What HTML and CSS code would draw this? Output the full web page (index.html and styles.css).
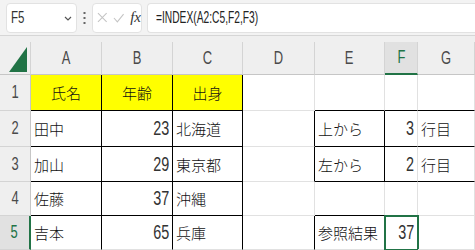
FILE: index.html
```html
<!DOCTYPE html>
<html lang="ja">
<head>
    <meta charset="UTF-8">
    <title>INDEX関数</title>
    <link rel="stylesheet" href="styles.css">
</head>
<body>

    <!-- Formula bar -->
    <div class="toolbar">
        <div class="namebox">
            <span class="narrow left">F5</span>
            <svg class="chevron" width="8" height="5" viewBox="0 0 8 5"><path d="M1 1l3 3 3-3" fill="none" stroke="#555" stroke-width="1.2"/></svg>
        </div>
        <svg class="grip" width="3" height="12" viewBox="0 0 3 12">
            <rect x="0.5" y="0" width="2" height="2" fill="#666"/>
            <rect x="0.5" y="5" width="2" height="2" fill="#666"/>
            <rect x="0.5" y="10" width="2" height="2" fill="#666"/>
        </svg>
        <div class="fxbox">
            <svg width="11" height="11" viewBox="0 0 11 11"><path d="M1 1l9 9M10 1l-9 9" stroke="#c4c4c4" stroke-width="1.1" fill="none"/></svg>
            <svg width="12" height="10" viewBox="0 0 12 10"><path d="M1 5l3.5 4L11 1" stroke="#c4c4c4" stroke-width="1.1" fill="none"/></svg>
            <span class="fx">fx</span>
        </div>
        <div class="formula"><span class="narrow left">=INDEX(A2:C5,F2,F3)</span></div>
    </div>

    <div class="gap"></div>

    <!-- Sheet -->
    <div class="sheet">
        <div class="head corner">
            <svg width="19" height="25" viewBox="0 0 19 25"><path d="M18 0v25H0z" fill="#217346"/></svg>
        </div>
        <div class="head"><span class="narrow">A</span></div>
        <div class="head"><span class="narrow">B</span></div>
        <div class="head"><span class="narrow">C</span></div>
        <div class="head"><span class="narrow">D</span></div>
        <div class="head"><span class="narrow">E</span></div>
        <div class="head active-col"><span class="narrow">F</span></div>
        <div class="head"><span class="narrow">G</span></div>

        <div class="rowhead"><span class="narrow">1</span></div>
        <div class="cell title br bb">氏名</div>
        <div class="cell title br bb">年齢</div>
        <div class="cell title br bb">出身</div>
        <div class="cell"></div>
        <div class="cell bb"></div>
        <div class="cell bb"></div>
        <div class="cell bb"></div>

        <div class="rowhead"><span class="narrow">2</span></div>
        <div class="cell br bb">田中</div>
        <div class="cell num br bb"><span class="narrow right">23</span></div>
        <div class="cell br bb">北海道</div>
        <div class="cell br"></div>
        <div class="cell br bb">上から</div>
        <div class="cell num bb"><span class="narrow right">3</span></div>
        <div class="cell bb">行目</div>

        <div class="rowhead"><span class="narrow">3</span></div>
        <div class="cell br bb">加山</div>
        <div class="cell num br bb"><span class="narrow right">29</span></div>
        <div class="cell br bb">東京都</div>
        <div class="cell br"></div>
        <div class="cell br bb">左から</div>
        <div class="cell num bb"><span class="narrow right">2</span></div>
        <div class="cell bb">行目</div>

        <div class="rowhead"><span class="narrow">4</span></div>
        <div class="cell br bb">佐藤</div>
        <div class="cell num br bb"><span class="narrow right">37</span></div>
        <div class="cell br bb">沖縄</div>
        <div class="cell"></div>
        <div class="cell bb"></div>
        <div class="cell bb"></div>
        <div class="cell"></div>

        <div class="rowhead active-row"><span class="narrow">5</span></div>
        <div class="cell br">吉本</div>
        <div class="cell num br"><span class="narrow right">65</span></div>
        <div class="cell br">兵庫</div>
        <div class="cell br"></div>
        <div class="cell">参照結果</div>
        <div class="cell num selected"><span class="narrow right">37</span></div>
        <div class="cell"></div>
    </div>

</body>
</html>
```

FILE: styles.css
```css
/* --- Basic Setup --- */
:root {
    --toolbar-bg: #f3f3f3;
    --head-bg: #efefef;
    --grid-line: #e1e1e1;
    --head-line: #d4d4d4;
    --excel-green: #217346;
    --jp: "Noto Sans CJK JP", sans-serif;
}

body {
    margin: 0;
    width: 475px;
    height: 250px;
    overflow: hidden;
    font-family: var(--jp);
    font-weight: 300;
    color: #111;
    background-color: #ffffff;
}

/* Tall, narrow latin glyphs like Excel's UI font (no condensed face installed) */
.narrow {
    display: inline-block;
    font-family: "Liberation Sans", sans-serif;
    font-weight: normal;
    transform: scaleX(0.72);
}

.narrow.left {
    transform-origin: left center;
}

.narrow.right {
    transform-origin: right center;
}

/* --- Formula Bar --- */
.toolbar {
    display: flex;
    align-items: center;
    height: 36px;
    padding-left: 6px;
    background-color: var(--toolbar-bg);
    border-bottom: 1px solid #d6d6d6;
    box-sizing: border-box;
}

.namebox,
.fxbox,
.formula {
    height: 30px;
    background-color: #ffffff;
    border: 1px solid #e2e2e2;
    border-radius: 4px;
    box-sizing: border-box;
    display: flex;
    align-items: center;
}

.namebox {
    width: 71px;
    padding: 0 4px 0 4px;
    justify-content: space-between;
    font-size: 16px;
    color: #333;
}

.chevron {
    margin-top: 2px;
}

.grip {
    margin: 0 6px 0 6px;
}

.fxbox {
    width: 50px;
    padding-left: 4px;
    gap: 5px;
    margin-right: 5px;
}

.fx {
    font-family: "Liberation Serif", serif;
    font-style: italic;
    font-size: 15px;
    color: #333;
    margin-left: 1px;
}

.formula {
    flex: 1;
    padding-left: 8px;
    border-right: none;
    border-radius: 4px 0 0 4px;
    font-size: 16px;
    color: #222;
}

.formula .narrow {
    transform: scaleX(0.64);
}

.gap {
    height: 6px;
    background-color: var(--head-bg);
}

/* --- Sheet Grid --- */
.sheet {
    display: grid;
    grid-template-columns: 31px 71px 71px 70px 72px 70px 33px 1fr;
    grid-template-rows: 33px 36px 36px 35px 34px 34px;
}

.head,
.rowhead {
    background-color: var(--head-bg);
    color: #4a4a4a;
    font-size: 18px;
    display: flex;
    align-items: center;
    justify-content: center;
    box-sizing: border-box;
}

.head {
    border-right: 1px solid var(--head-line);
    border-bottom: 1px solid #c6c6c6;
}

.rowhead {
    border-right: 1px solid #c6c6c6;
    border-bottom: 1px solid var(--head-line);
}

.corner {
    justify-content: flex-start;
    padding-left: 9px;
    padding-top: 3px;
}

.active-col {
    background-color: #e1e1e1;
    color: var(--excel-green);
    border-bottom: 2px solid var(--excel-green);
}

.active-row {
    background-color: #e1e1e1;
    color: var(--excel-green);
    border-right: 2px solid var(--excel-green);
}

.cell {
    border-right: 1px solid var(--grid-line);
    border-bottom: 1px solid var(--grid-line);
    box-sizing: border-box;
    padding: 0 3px;
    font-size: 15px;
    display: flex;
    align-items: center;
    white-space: nowrap;
}

.cell.br {
    border-right-color: #000;
}

.cell.bb {
    border-bottom-color: #000;
}

.title {
    background-color: #ffff00;
    justify-content: center;
}

.num {
    justify-content: flex-end;
    font-size: 20px;
    color: #333;
}

.selected {
    outline: 2px solid var(--excel-green);
    outline-offset: -1px;
}
```
